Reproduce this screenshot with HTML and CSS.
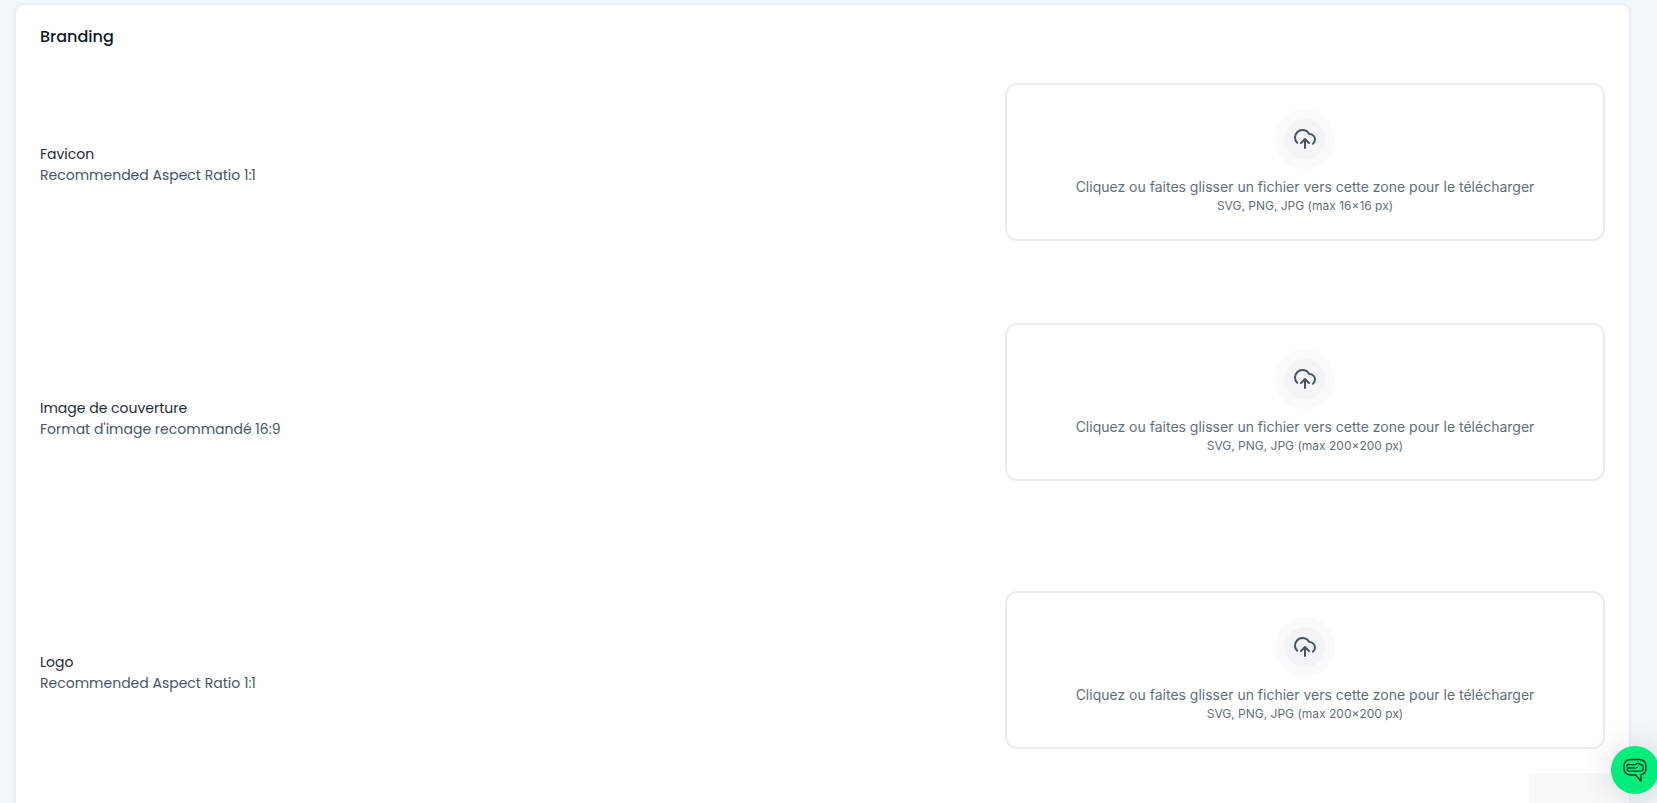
FILE: index.html
```html
<!DOCTYPE html>
<html lang="fr">
<head>
    <meta charset="UTF-8">
    <meta name="viewport" content="width=device-width, initial-scale=1.0">
    <title>Branding</title>
    <link rel="stylesheet" href="styles.css">
</head>
<body>
    <svg class="sprite" aria-hidden="true">
        <symbol id="upload-cloud" viewBox="0 0 24 24">
            <path d="M8 16L12 12M12 12L16 16M12 12V21M20 16.7428C21.2215 15.734 22 14.2079 22 12.5C22 9.46243 19.5376 7 16.5 7C16.2815 7 16.0771 6.886 15.9661 6.69774C14.6621 4.48484 12.2544 3 9.5 3C5.35786 3 2 6.35786 2 10.5C2 12.5661 2.83545 14.4371 4.18695 15.7935"/>
        </symbol>
    </svg>

    <main class="page">
        <section class="card">
            <h2 class="card-title">Branding</h2>

            <div class="rows">
                <div class="row">
                    <div class="row-text">
                        <h3>Favicon</h3>
                        <p>Recommended Aspect Ratio 1:1</p>
                    </div>
                    <div class="uploader">
                        <label class="dropzone" for="favicon">
                            <input type="file" id="favicon" accept=".svg,.png,.jpg">
                            <span class="circle"><svg><use href="#upload-cloud"/></svg></span>
                            <span class="hint">Cliquez ou faites glisser un fichier vers cette zone pour le télécharger</span>
                            <span class="formats">SVG, PNG, JPG (max 16×16 px)</span>
                        </label>
                    </div>
                </div>

                <div class="row">
                    <div class="row-text">
                        <h3>Image de couverture</h3>
                        <p>Format d'image recommandé 16:9</p>
                    </div>
                    <div class="uploader uploader-cover">
                        <label class="dropzone" for="cover">
                            <input type="file" id="cover" accept=".svg,.png,.jpg">
                            <span class="circle"><svg><use href="#upload-cloud"/></svg></span>
                            <span class="hint">Cliquez ou faites glisser un fichier vers cette zone pour le télécharger</span>
                            <span class="formats">SVG, PNG, JPG (max 200×200 px)</span>
                        </label>
                    </div>
                </div>

                <div class="row">
                    <div class="row-text">
                        <h3>Logo</h3>
                        <p>Recommended Aspect Ratio 1:1</p>
                    </div>
                    <div class="uploader">
                        <label class="dropzone" for="logo">
                            <input type="file" id="logo" accept=".svg,.png,.jpg">
                            <span class="circle"><svg><use href="#upload-cloud"/></svg></span>
                            <span class="hint">Cliquez ou faites glisser un fichier vers cette zone pour le télécharger</span>
                            <span class="formats">SVG, PNG, JPG (max 200×200 px)</span>
                        </label>
                    </div>
                </div>
            </div>
        </section>
    </main>

    <div class="chat-panel"></div>
    <button class="chat" type="button" aria-label="Chat">
        <svg viewBox="0 0 24 24">
            <path d="M7.500 1.500h9a6.500 6.500 0 0 1 6.500 6.500v2.500a6.500 6.500 0 0 1-5 6.300V23l-5.500-6h-5a6.500 6.500 0 0 1-6.500-6.500V8a6.500 6.500 0 0 1 6.500-6.500z"/>
            <path class="croc" d="M5.500 6.500c3 0 5 .8 7.500 0 .6-1.800 3.600-1.800 4.200 0 2 .2 3.200 1.500 3.200 3.500 0 2.200-1.400 3.200-3.400 3.200H6c-2.400 0-2.400-2.800-.3-2.800M5.500 6.500c-2 0-2.200 2-.8 2.800"/>
            <path class="teeth" d="M5 9l1 1.800L7 9l1 1.800L9 9l1 1.800L11 9l1 1.800L13 9.500h2M15 7.200h.8"/>
        </svg>
    </button>
</body>
</html>
```

FILE: styles.css
```css
* {
    box-sizing: border-box;
}

body {
    margin: 0;
    background: #f0f6fa;
    color: #1f2a3c;
    font-family: Inter, "Liberation Sans", sans-serif;
}

h2, h3, p {
    margin: 0;
}

.sprite {
    display: none;
}

.page {
    height: 100vh;
    padding: 4px 27px 24px 15px;
    overflow-y: auto;
    scrollbar-width: none;
}

.card {
    padding: 20px 24px 76px;
    background: #fff;
    border: 1px solid #e8eaf0;
    border-radius: 8px;
    box-shadow: 0 0 3px #e2e7ee;
}

.card-title {
    color: #101828;
    font-family: Poppins, Inter, sans-serif;
    font-size: 16px;
    font-weight: 500;
    line-height: 24px;
}

.rows {
    display: flex;
    flex-direction: column;
    gap: 76px;
    margin-top: 34px;
}

.row {
    display: flex;
    justify-content: space-between;
    align-items: center;
    gap: 24px;
}

.row-text {
    font-family: Poppins, Inter, sans-serif;
    font-size: 14px;
    line-height: 21px;
}

.row-text h3 {
    font-size: 14px;
    font-weight: 400;
}

.row-text p {
    color: #475467;
}

.uploader {
    width: 600px;
    padding-bottom: 6px;
}

.uploader-cover {
    padding-bottom: 34px;
}

.dropzone {
    display: flex;
    flex-direction: column;
    align-items: center;
    padding: 24px;
    border: 2px solid #eaeaf0;
    border-radius: 12px;
    color: #5f6f7c;
    text-align: center;
    cursor: pointer;
}

.dropzone input {
    position: absolute;
    width: 1px;
    height: 1px;
    opacity: 0;
}

.circle {
    display: flex;
    align-items: center;
    justify-content: center;
    width: 60px;
    height: 60px;
    margin-bottom: 8px;
    background: #f2f4f7;
    border: 10px solid #f9fafb;
    border-radius: 50%;
}

.circle svg {
    width: 24px;
    height: 24px;
    fill: none;
    stroke: #475467;
    stroke-width: 2;
    stroke-linecap: round;
    stroke-linejoin: round;
}

.hint {
    font-size: 14px;
    line-height: 20px;
}

.formats {
    font-size: 12px;
    line-height: 18px;
}

.chat-panel {
    position: fixed;
    right: 8px;
    bottom: 0;
    width: 120px;
    height: 30px;
    background: rgba(240, 243, 247, 0.5);
}

.chat {
    position: fixed;
    right: -2px;
    bottom: 9px;
    display: flex;
    align-items: center;
    justify-content: center;
    width: 48px;
    height: 48px;
    padding: 0;
    background: #00ed7b;
    border: 0;
    border-radius: 50%;
    box-shadow: 0 2px 32px rgba(0, 0, 0, 0.16);
    cursor: pointer;
}

.chat svg {
    width: 24px;
    height: 24px;
    fill: none;
    stroke: #07431f;
    stroke-width: 1.5;
    stroke-linejoin: round;
}

.chat .croc {
    stroke-width: 1.3;
}

.chat .teeth {
    stroke-width: 1;
}
```
